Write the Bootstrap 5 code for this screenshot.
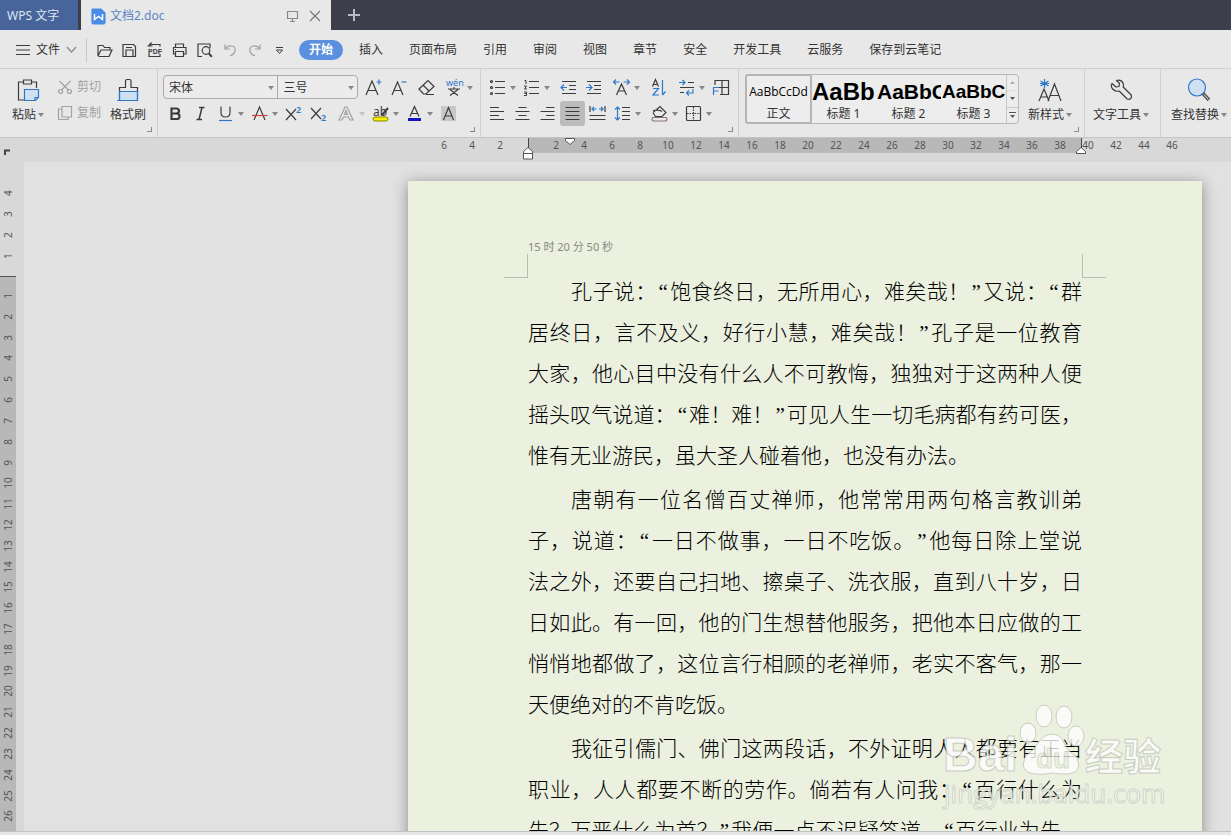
<!DOCTYPE html>
<html lang="zh-CN">
<head>
<meta charset="utf-8">
<meta name="viewport" content="width=device-width, initial-scale=1">
<title>文档2.doc - WPS 文字</title>
<link href="https://cdn.jsdelivr.net/npm/bootstrap@5.3.0/dist/css/bootstrap.min.css" rel="stylesheet">
<style>
:root{--ink:#3c3c3c;--chrome:#e8e8e8;--blue:#2f78c8}
body{font-family:"Noto Sans","Noto Sans CJK SC",sans-serif;font-size:12px;line-height:18px;color:#333;background:#e1e1e1}
button{color:inherit;font:inherit;background:none;border:0;padding:0}
svg{display:block;fill:none;stroke:var(--ink);stroke-width:1.2}
svg text{stroke:none;fill:var(--ink)}
svg .b{stroke:var(--blue)}
svg text.b{stroke:none;fill:var(--blue)}
svg .lt{fill:#cfe0f3}
.titlebar{background:#3c3f4b;height:30px}
.home-tab{background:#48659b;width:78px;color:#dfe5f0;padding:2px 0 0 7px}
.doc-tab{background:var(--chrome);width:250px;margin-left:3px;padding:2px 9px 0 10px;color:#5b84c4}
.doc-tab a{color:inherit}
.new-tab{width:46px}
.menubar{background:var(--chrome);height:39px;border-bottom:1px solid #d0d0d0;padding-top:2px}
.file-btn{padding-left:15px;gap:5px}
.vline{width:1px;height:24px;background:#c6c6c6;margin:0 5px 0 8px}
.menubar .nav-link{padding:0 13px;color:#333}
.menubar .nav-link.active{background:#5b8fe0;color:#fff;font-weight:700;border-radius:10px;padding:1px 10px;margin:0 3px 0 7px}
.ib{width:25px;height:25px;flex:none}
.ib.caret{width:34px}
.caret{display:flex;align-items:center}
.caret::after,.pick::after{content:"";border:3px solid transparent;border-top:4px solid #888;border-bottom:0;flex:none}
.ib.caret::after{margin-top:2px}
.ib.pressed{background:#bcbcbc;border-radius:3px}
.faded{opacity:.4}
.gap-l{margin-left:3px}
.ribbon{background:var(--chrome);height:69px;border-bottom:1px solid #c4c4c4}
.group{position:relative;padding-top:5px;border-right:1px solid #d0d0d0;flex:none;height:68px}
.group .line{height:26px}
.corner::before{content:"";position:absolute;right:5px;bottom:5px;width:5px;height:5px;border:solid #888;border-width:0 1px 1px 0}
.big{display:flex;flex-direction:column;align-items:center;height:52px;white-space:nowrap}
.big svg{margin:4px 0 4px}
.big .caret{gap:2px}
.clip{padding:5px 9px 0 12px;width:158px;gap:9px}
.fontg{padding-left:5px;width:323px}
.parag{padding-left:4px;width:258px}
.styleg{padding-left:6px;width:346px;gap:9px}
.toolg{padding:5px 11px 0 8px}
.findg{padding:5px 0 0 10px}
.picks{border:1px solid #aaa;border-radius:4px;height:24px;width:195px;background:#ececec;overflow:hidden}
.pick{position:relative;width:79px}
.pick:first-child{width:115px;border-right:1px solid #aaa}
.pick::after{position:absolute;right:3px;top:10px}
.pick select{appearance:none;border:0;background:none;width:100%;height:22px;padding:1px 5px 0;font-size:12px;line-height:22px;color:#333;border-radius:0}
.gallery{border:1px solid #b8b8b8;border-radius:4px;height:50px;width:274px;background:#ededed}
.sty{width:65px;height:48px;overflow:hidden;text-align:center;flex:none}
.sty.on{outline:2px solid #b5b5b5;outline-offset:-1px;border-radius:2px}
.sty span{display:block;white-space:nowrap}
.pv{height:30px;line-height:34px;color:#000;font-family:"Liberation Sans",sans-serif;font-weight:700;text-align:left;padding-left:1px}
.pv.body-pv{font-family:"Open Sans","Noto Sans",sans-serif;font-weight:400;font-size:12px;padding:0;text-align:center}
.pv.h-a{font-size:24px}.pv.h-b{font-size:21px}.pv.h-c{font-size:19px}
.scr{border-left:1px solid #c8c8c8}
.scr button{flex:1 1 0;display:flex;align-items:center;justify-content:center;border-bottom:1px solid #c8c8c8;width:100%}
.scr button:last-child{border:0}
.ruler{background:#d8d8d8;height:24px;position:relative;font-size:10px;line-height:14px;color:#555}
.ruler .span{position:absolute;right:149px;top:0;width:554px;height:15px;background:#b8b8b8;border:solid #444;border-width:0 1px}
.ruler .ticks{position:relative;padding-right:45px}
.ruler .ticks span{width:28px;text-align:center;flex:none}
.ruler svg{position:absolute;stroke:#555;fill:#fff;stroke-width:1}
.mk-a{right:697px;top:8px}.mk-b{right:655px;top:0}.mk-c{right:144px;top:8px}
.ruler .tabsel{left:4px;top:11px;fill:none;stroke:#444;stroke-width:2}
.vruler{width:24px;background:#d8d8d8;font-size:10px;line-height:12px;color:#555;flex:none}
.vruler>div{width:16px}
.vruler span{writing-mode:vertical-rl;transform:rotate(180deg);display:flex;align-items:center;justify-content:center;width:16px}
.v-top{height:114px;padding-bottom:9px;flex:none}
.v-top span{height:21px}
.v-main{background:#b8b8b8;border-top:1px solid #555;padding:9px 0 4px;min-height:0}
.v-main span{flex:1 1 0;min-height:0}
.canvas{background:#e1e1e1;overflow:hidden;padding:19px 29px 0 0;position:relative;min-width:0}
.sheet{width:794px;height:1123px;background:#ebf0df;box-shadow:0 2px 14px rgba(0,0,0,.38);padding:58px 120px 0;margin-left:auto}
.sheet header{font-size:11px;line-height:15px;color:#858a80}
.crops{margin:0 -24px -6px}
.crops i{width:24px;height:24px;border:0 solid #b9beb0;border-bottom-width:1px}
.crops i:first-child{border-right-width:1px}
.crops i:last-child{border-left-width:1px}
.sheet p{font-family:"Liberation Serif","Noto Sans CJK SC",serif;font-weight:300;font-size:21px;line-height:41px;color:#000;margin:0 0 3px;text-indent:43px;text-align:justify;text-align-last:justify;white-space:nowrap;text-spacing-trim:space-all}
.sheet p span{display:block;text-indent:0;text-align-last:left}
.sheet p i{font-style:normal;padding:0 2px}
.brand{position:absolute;right:61px;bottom:18px}
.statusline{height:4px;background:#e6e6e6;border-top:1px solid #c2c2c2;flex:none}
</style>
</head>
<body>
<div class="d-flex flex-column vh-100 overflow-hidden">
  <div class="titlebar d-flex align-items-stretch flex-shrink-0">
    <button class="home-tab text-start">WPS 文字</button>
    <div class="doc-tab d-flex align-items-center">
      <svg class="me-1" width="15" height="17" viewBox="0 0 15 17"><path d="M2 1h8l4 4v9q0 2-2 2H3q-2 0-2-2V2q0-1 1-1z" fill="#4a8be8" stroke="#4a8be8"/><path d="M3.500 6v5.500L7.500 8.500l4 3V6" stroke="#fff" stroke-width="1.500"/></svg>
      <a href="#" class="text-decoration-none">文档2.doc</a>
      <svg class="ms-auto" width="14" height="14" viewBox="0 0 14 14" style="stroke:#888"><path d="M1.500 2.500h10v7h-10zM6.500 9.500v3M4 12.500h5"/></svg>
      <button class="ms-2" aria-label="关闭"><svg width="14" height="14" viewBox="0 0 14 14"><path d="M2 2l10 10M12 2L2 12" stroke="#777"/></svg></button>
    </div>
    <button class="new-tab d-flex align-items-center justify-content-center" aria-label="新建"><svg width="14" height="14"><path d="M7 1v12M1 7h12" stroke="#b9bbc2" stroke-width="2"/></svg></button>
  </div>

  <div class="menubar d-flex align-items-center flex-shrink-0">
    <button class="file-btn d-flex align-items-center"><svg width="16" height="12"><path d="M1 1.500h14M1 6h14M1 10.500h14"/></svg><span>文件</span><svg width="13" height="8"><path d="M2 1l4.500 5L11 1" stroke="#888"/></svg></button>
    <div class="vline"></div>
    <button class="ib" aria-label="打开"><svg width="25" height="25" viewBox="0 0 25 25"><path d="M6 18V7.500h5l1.500 2H18V12M6 18l3-6h11l-3 6.500H6.500"/></svg></button>
    <button class="ib" aria-label="保存"><svg width="25" height="25" viewBox="0 0 25 25"><path d="M6 6.500h10.500l2 2V18.500H6zM9 18v-6h7v6M9 9.500h6"/></svg></button>
    <button class="ib" aria-label="输出为PDF"><svg width="25" height="25" viewBox="0 0 25 25"><path d="M8 8.500V6.500h10v2M7 16v2.500h11V16M9.500 4.500l-3 3.500h4"/><text x="6" y="15.500" font-size="7" font-weight="700" font-family="Liberation Sans">PDF</text></svg></button>
    <button class="ib" aria-label="打印"><svg width="25" height="25" viewBox="0 0 25 25"><path d="M8.500 9V6h8v3M8 16H6.500V9.500h12.500V16H17M8.500 13.500h8V18.500h-8zM8 11.500h1"/></svg></button>
    <button class="ib" aria-label="打印预览"><svg width="25" height="25" viewBox="0 0 25 25"><path d="M10 18.500H6V6h12v4"/><circle cx="14" cy="12.500" r="3.800"/><path d="M16.800 15.300l3 3.500" stroke-width="2"/></svg></button>
    <button class="ib faded" aria-label="撤销"><svg width="25" height="25" viewBox="0 0 25 25"><path d="M8 6.500v4.500h5M8 11q3-4 7-3t3 5-5 4.500"/></svg></button>
    <button class="ib faded" aria-label="恢复"><svg width="25" height="25" viewBox="0 0 25 25"><path d="M18 6.500v4.500h-5M18 11q-3-4-7-3t-3 5 5 4.500"/></svg></button>
    <button class="ib" aria-label="自定义"><svg width="25" height="25" viewBox="0 0 25 25"><path d="M9 9.500h7M9.500 12l3 3.500 3-3.500z" stroke-width="1"/></svg></button>
    <nav class="nav flex-nowrap align-items-center text-nowrap">
      <a class="nav-link active" href="#">开始</a><a class="nav-link" href="#">插入</a><a class="nav-link" href="#">页面布局</a><a class="nav-link" href="#">引用</a><a class="nav-link" href="#">审阅</a><a class="nav-link" href="#">视图</a><a class="nav-link" href="#">章节</a><a class="nav-link" href="#">安全</a><a class="nav-link" href="#">开发工具</a><a class="nav-link" href="#">云服务</a><a class="nav-link" href="#">保存到云笔记</a>
    </nav>
  </div>

  <div class="ribbon d-flex flex-shrink-0 overflow-hidden">
    <div class="group corner clip d-flex text-nowrap">
      <button class="big me-1"><svg width="24" height="24" viewBox="0 0 24 24"><path d="M8 4H2.500v18H8M16 4h4.500v6"/><path d="M7.500 2h8v4h-8z"/><path class="b lt" d="M8.500 11.500h14v8l-3 3h-11z"/><path class="b" d="M22 19.500h-3v3"/></svg><span class="caret">粘贴</span></button>
      <div class="faded">
        <button class="line d-flex align-items-center gap-1"><svg width="16" height="16" viewBox="0 0 16 16"><path d="M2.500 2l9 9M13.500 2l-9 9"/><circle cx="3.500" cy="12.500" r="2"/><circle cx="12.500" cy="12.500" r="2"/></svg>剪切</button>
        <button class="line d-flex align-items-center gap-1"><svg width="16" height="16" viewBox="0 0 16 16"><path d="M5 1.500h9.500V12H5zM5 4H1.500v10.500H11V12"/></svg>复制</button>
      </div>
      <button class="big"><svg width="24" height="24" viewBox="0 0 24 24"><path class="b lt" d="M3.500 13.500h18v9h-18z" stroke="none"/><path d="M3.500 13V9.500h6V3q0-1.500 1.500-1.500h2.500q1.500 0 1.500 1.500v6.500h6.500V13"/><path class="b" d="M1 22.500h20.500V13.500h-18v9"/></svg><span>格式刷</span></button>
    </div>

    <div class="group corner fontg">
      <div class="line d-flex align-items-center">
        <div class="picks d-flex">
          <div class="pick"><select class="form-select" aria-label="字体"><option>宋体</option></select></div>
          <div class="pick"><select class="form-select" aria-label="字号"><option>三号</option></select></div>
        </div>
        <button class="ib gap-l" aria-label="增大字号"><svg width="25" height="25" viewBox="0 0 25 25"><path d="M5 20l6-14 6 14M7 15.500h8"/><path class="b" d="M15.500 7h5M18 4.500v5"/></svg></button>
        <button class="ib" aria-label="减小字号"><svg width="25" height="25" viewBox="0 0 25 25"><path d="M6 20l5.500-13L17 20M8 15.500h7"/><path class="b" d="M15.500 7h5"/></svg></button>
        <button class="ib gap-l" aria-label="清除格式"><svg width="25" height="25" viewBox="0 0 25 25"><path d="M5 14L14 5.500l6 6L12 19H9.500zM9 10l6 6M12 19.500h8"/></svg></button>
        <button class="ib caret gap-l" aria-label="拼音指南"><svg width="25" height="25" viewBox="0 0 25 25"><text class="b" x="4" y="11" font-size="9" font-family="Noto Sans">wén</text><path d="M6 14h12M12 12v2M8 14.500l8 6M16 14.500l-8 6"/></svg></button>
      </div>
      <div class="line d-flex align-items-center">
        <button class="ib" aria-label="加粗"><svg width="25" height="25" viewBox="0 0 25 25"><path d="M8.500 7.500h4.500q3 0 3 2.500t-3 2.500H8.500zM8.500 12.500h5q3 0 3 2.800t-3 2.700h-5z" stroke-width="2.200"/></svg></button>
        <button class="ib" aria-label="倾斜"><svg width="25" height="25" viewBox="0 0 25 25"><path d="M11 6.500h5.500M8.500 18.500H14M14 6.500l-3 12" stroke-width="1.500"/></svg></button>
        <button class="ib caret" aria-label="下划线"><svg width="25" height="25" viewBox="0 0 25 25"><path d="M8 5.500v6q0 4.500 4.500 4.500t4.500-4.500v-6"/><path class="b" d="M6 19.500h13"/></svg></button>
        <button class="ib caret" aria-label="删除线"><svg width="25" height="25" viewBox="0 0 25 25"><path d="M7 19l5.500-13L18 19"/><path d="M5 14.500h15.500" style="stroke:#d04040"/></svg></button>
        <button class="ib" aria-label="上标"><svg width="25" height="25" viewBox="0 0 25 25"><path d="M5 8l10 11M15 8L5 19"/><text class="b" x="15" y="12" font-size="9" font-weight="600">2</text></svg></button>
        <button class="ib" aria-label="下标"><svg width="25" height="25" viewBox="0 0 25 25"><path d="M5 7l10 11M15 7L5 18"/><text class="b" x="15" y="20" font-size="9" font-weight="600">2</text></svg></button>
        <button class="ib caret gap-l faded" aria-label="文字效果"><svg width="25" height="25" viewBox="0 0 25 25"><path d="M5 19L11 6h2l6 13h-3l-1.500-3h-5L8 19zM12 9.500L10.500 13.500h3z"/></svg></button>
        <button class="ib caret" aria-label="突出显示"><svg width="25" height="25" viewBox="0 0 25 25"><text x="5" y="15" font-size="12">ab</text><path d="M14 14l6-7" stroke-width="2"/><rect x="5" y="16" width="15" height="4" rx="2" fill="#f4f000" stroke="#8a8500" stroke-width="1"/></svg></button>
        <button class="ib caret" aria-label="字体颜色"><svg width="25" height="25" viewBox="0 0 25 25"><path d="M8 15.500L12.500 5.500l4.500 10M9.500 12.500h6"/><path d="M6 18.500h13" stroke="#1414c0" stroke-width="3"/></svg></button>
        <button class="ib" aria-label="字符底纹"><svg width="25" height="25" viewBox="0 0 25 25"><path d="M5 5h15v15H5z" fill="#c8c8c8" stroke="none"/><path d="M7.500 19L12.500 6.500 17.500 19M9 15h7"/></svg></button>
      </div>
    </div>

    <div class="group corner parag">
      <div class="line d-flex align-items-center">
        <button class="ib caret" aria-label="项目符号"><svg width="25" height="25" viewBox="0 0 25 25"><path d="M10 6.500h10M10 12.500h10M10 18.500h10"/><circle cx="6.500" cy="6.500" r="1"/><circle cx="6.500" cy="12.500" r="1"/><circle cx="6.500" cy="18.500" r="1"/></svg></button>
        <button class="ib caret" aria-label="编号"><svg width="25" height="25" viewBox="0 0 25 25"><path d="M10 6.500h10M10 12.500h10M10 18.500h10"/><path d="M5.500 5.500H7V9M5 11h2.500l-2 3h2.500M5 17h2.500v3.500H5M5.500 18.500h2" stroke-width="1"/></svg></button>
        <button class="ib gap-l" aria-label="减少缩进"><svg width="25" height="25" viewBox="0 0 25 25"><path d="M6 6.500h14M13 10.500h7M13 14.500h7M6 18.500h14"/><path class="b" d="M5 12.500h6M8 9.500l-3 3 3 3"/></svg></button>
        <button class="ib" aria-label="增加缩进"><svg width="25" height="25" viewBox="0 0 25 25"><path d="M6 6.500h14M13 10.500h7M13 14.500h7M6 18.500h14"/><path class="b" d="M5 12.500h6M8 9.500l3 3-3 3"/></svg></button>
        <button class="ib caret gap-l" aria-label="字符缩放"><svg width="25" height="25" viewBox="0 0 25 25"><path d="M7.500 20l5-11 5 11M9 16h7"/><path class="b" d="M4.500 7h6M7 4.500L4.500 7 7 9.500M14.500 7h6M18 4.500L20.500 7 18 9.500"/></svg></button>
        <button class="ib gap-l" aria-label="排序"><svg width="25" height="25" viewBox="0 0 25 25"><path d="M6.500 11.500L9.500 4.500l3 7M7.500 9.500h4"/><path class="b" d="M7 13.500h5.500L7 20h6M16.500 5v15M16.500 20l3-3.500"/></svg></button>
        <button class="ib caret gap-l" aria-label="制表"><svg width="25" height="25" viewBox="0 0 25 25"><path d="M14 7.500h6M6 12.500h14M6 17.500h4"/><path class="b" d="M5 7.500h6M8.500 5l2.500 2.500L8.500 10M19 14v4h-6.500M15 15.500L12.500 18l2.500 2.500"/></svg></button>
        <button class="ib" aria-label="表格"><svg width="25" height="25" viewBox="0 0 25 25"><path d="M7 10V5.500h13.500v14H12M14 5.500v14M9 12.500h11.500"/><path class="b" d="M5.500 20V12.500H11M5.500 16h5"/></svg></button>
      </div>
      <div class="line d-flex align-items-center">
        <button class="ib" aria-label="左对齐"><svg width="25" height="25" viewBox="0 0 25 25"><path d="M5 6.500h9M5 10.500h14M5 14.500h9M5 18.500h14"/></svg></button>
        <button class="ib" aria-label="居中"><svg width="25" height="25" viewBox="0 0 25 25"><path d="M8.500 6.500h8M5.500 10.500h14M8.500 14.500h8M5.500 18.500h14"/></svg></button>
        <button class="ib" aria-label="右对齐"><svg width="25" height="25" viewBox="0 0 25 25"><path d="M11 6.500h8.500M5.500 10.500h14M11 14.500h8.500M5.500 18.500h14"/></svg></button>
        <button class="ib pressed" aria-label="两端对齐"><svg width="25" height="25" viewBox="0 0 25 25"><path d="M5.500 6.500h14M5.500 10.500h14M5.500 14.500h14M5.500 18.500h14"/></svg></button>
        <button class="ib" aria-label="分散对齐"><svg width="25" height="25" viewBox="0 0 25 25"><path d="M4.500 14.500h16M4.500 18.500h16M5 5v6M20 5v6"/><path class="b" d="M7 8h4.500M9 6L7 8l2 2M14 8h4M16 6l2 2-2 2"/></svg></button>
        <button class="ib caret" aria-label="行距"><svg width="25" height="25" viewBox="0 0 25 25"><path d="M12 6.500h8M12 10.500h8M12 14.500h8M12 18.500h8"/><path class="b" d="M7.500 6v13M5 8.500L7.500 6 10 8.500M5 16.500L7.500 19l2.500-2.500"/></svg></button>
        <button class="ib caret gap-l" aria-label="底纹颜色"><svg width="25" height="25" viewBox="0 0 25 25"><path d="M6 11.500l7-6 6 6-4 4H8.500L6 12M6 9.500q6-1 9 1"/><rect x="5" y="16.500" width="15" height="3.500" rx="1.700" stroke="#8c7078"/></svg></button>
        <button class="ib caret" aria-label="边框"><svg width="25" height="25" viewBox="0 0 25 25"><rect x="5.500" y="5.500" width="14" height="14" rx="1"/><path d="M12.500 6v13M6 12.500h13" stroke-dasharray="1.500 1"/></svg></button>
      </div>
    </div>

    <div class="group corner styleg d-flex text-nowrap">
      <div class="gallery d-flex">
        <button class="sty on"><span class="pv body-pv">AaBbCcDd</span><span>正文</span></button>
        <button class="sty"><span class="pv h-a">AaBb</span><span>标题 1</span></button>
        <button class="sty"><span class="pv h-b">AaBbCc</span><span>标题 2</span></button>
        <button class="sty"><span class="pv h-c">AaBbCc</span><span>标题 3</span></button>
        <div class="scr d-flex flex-column flex-fill">
          <button aria-label="上一行" class="faded"><svg width="5" height="3"><path d="M0 3l2.500-3L5 3z" fill="#555" stroke="none"/></svg></button>
          <button aria-label="下一行"><svg width="5" height="3"><path d="M0 0l2.500 3L5 0z" fill="#555" stroke="none"/></svg></button>
          <button aria-label="更多样式"><svg width="7" height="8"><path d="M0 1.500h7" stroke="#555" stroke-width="1"/><path d="M1 4l2.500 3L6 4z" fill="#555" stroke="none"/></svg></button>
        </div>
      </div>
      <button class="big"><svg width="26" height="24" viewBox="0 0 26 24"><path d="M2 23l5-12 5 12M4 19h7M11 23L17.500 6 24 23M13.500 17.500h8.500"/><path class="b" d="M7.500 1v9M3.500 3l8 5M11.500 3l-8 5M3 5.500h9"/></svg><span class="caret">新样式</span></button>
    </div>

    <div class="group toolg d-flex text-nowrap"><button class="big"><svg width="24" height="24" viewBox="0 0 24 24"><path d="M7.500 2.500Q12 1 14 5q1 2 .2 4l8 8q1 2-.5 3.500t-3.500.5l-8-8q-4 1-6.500-2T3 5.500L7 9l3-.5.500-3z" stroke-linejoin="round"/></svg><span class="caret">文字工具</span></button></div>
    <div class="group findg border-0 d-flex text-nowrap"><button class="big"><svg width="24" height="24" viewBox="0 0 24 24"><circle class="b lt" cx="10" cy="9.500" r="8.500"/><path d="M16 15.500l6 6.500" stroke="#555" stroke-width="3.500"/><path d="M17 16.500l4.500 5" stroke="#ddd" stroke-width="1"/></svg><span class="caret">查找替换</span></button></div>
  </div>

  <div class="ruler flex-shrink-0">
    <div class="span"></div>
    <svg class="tabsel" width="8" height="8"><path d="M1 6V1.500h5"/></svg>
    <div class="ticks d-flex justify-content-end"><span>6</span><span>4</span><span>2</span><span></span><span>2</span><span>4</span><span>6</span><span>8</span><span>10</span><span>12</span><span>14</span><span>16</span><span>18</span><span>20</span><span>22</span><span>24</span><span>26</span><span>28</span><span>30</span><span>32</span><span>34</span><span>36</span><span>38</span><span>40</span><span>42</span><span>44</span><span>46</span></div>
    <svg class="mk-a" width="12" height="14"><path d="M1.500 7.500V5.500l4.500-4 4.500 4v2zM1.500 7.500h9v5.500h-9z"/></svg>
    <svg class="mk-b" width="12" height="8"><path d="M1.500.5h9v2L6 6.500l-4.500-4z"/></svg>
    <svg class="mk-c" width="12" height="8"><path d="M1.500 7.500V5.500l4.500-4 4.500 4v2z"/></svg>
  </div>

  <div class="d-flex flex-fill" style="min-height:0">
    <div class="vruler d-flex flex-column">
      <div class="v-top d-flex flex-column justify-content-end"><span>4</span><span>3</span><span>2</span><span>1</span></div>
      <div class="v-main d-flex flex-column flex-fill"><span>1</span><span>2</span><span>3</span><span>4</span><span>5</span><span>6</span><span>7</span><span>8</span><span>9</span><span>10</span><span>11</span><span>12</span><span>13</span><span>14</span><span>15</span><span>16</span><span>17</span><span>18</span><span>19</span><span>20</span><span>21</span><span>22</span><span>23</span><span>24</span><span>25</span><span>26</span></div>
    </div>
    <main class="canvas flex-fill">
      <article class="sheet">
        <header>15 时 20 分 50 秒</header>
        <div class="crops d-flex justify-content-between"><i></i><i></i></div>
        <p>孔子说：<i>“</i>饱食终日，无所用心，难矣哉！<i>”</i>又说：<i>“</i>群<br>居终日，言不及义，好行小慧，难矣哉！<i>”</i>孔子是一位教育<br>大家，他心目中没有什么人不可教悔，独独对于这两种人便<br>摇头叹气说道：<i>“</i>难！难！<i>”</i>可见人生一切毛病都有药可医，<span>惟有无业游民，虽大圣人碰着他，也没有办法。</span></p>
        <p>唐朝有一位名僧百丈禅师，他常常用两句格言教训弟<br>子，说道：<i>“</i>一日不做事，一日不吃饭。<i>”</i>他每日除上堂说<br>法之外，还要自己扫地、擦桌子、洗衣服，直到八十岁，日<br>日如此。有一回，他的门生想替他服务，把他本日应做的工<br>悄悄地都做了，这位言行相顾的老禅师，老实不客气，那一<span>天便绝对的不肯吃饭。</span></p>
        <p>我征引儒门、佛门这两段话，不外证明人人都要有正当<br>职业，人人都要不断的劳作。倘若有人问我：<i>“</i>百行什么为<br>先？万恶什么为首？<i>”</i>我便一点不迟疑答道，<i>“</i>百行业为先，</p>
      </article>
      <svg class="brand" width="230" height="112" viewBox="0 0 230 112" aria-label="Baidu 经验">
        <g fill="#fff" stroke="#c0c5b7" stroke-width="1" opacity=".78">
          <ellipse cx="88" cy="32" rx="8" ry="10"/><ellipse cx="104" cy="15" rx="8" ry="11"/><ellipse cx="124" cy="16" rx="8" ry="11"/><ellipse cx="136" cy="35" rx="8" ry="10"/>
          <path d="M112 33q8 0 12 9t12 13q8 17-9 18-8 0-15-1-9 2-17 1-17-2-9-18 9-7 13-14t13-8z"/>
          <g style="font-family:'Liberation Sans','Noto Sans CJK SC',sans-serif" font-weight="700">
            <text x="3" y="70" font-size="48" style="fill:#fff;stroke:#c0c5b7">Bai</text>
            <text x="96" y="67" font-size="28" style="fill:#ebf0df;stroke:#d4d9c9">du</text>
            <text x="145" y="69" font-size="38" style="fill:#fff;stroke:#c0c5b7">经验</text>
          </g>
          <text x="4" y="102" font-size="26" style="fill:#fff;stroke:#c8cdbf;font-family:'Open Sans',sans-serif">jingyan.baidu.com</text>
        </g>
      </svg>
    </main>
  </div>
  <div class="statusline"></div>
</div>
<script src="https://cdn.jsdelivr.net/npm/bootstrap@5.3.0/dist/js/bootstrap.bundle.min.js"></script>
</body>
</html>
